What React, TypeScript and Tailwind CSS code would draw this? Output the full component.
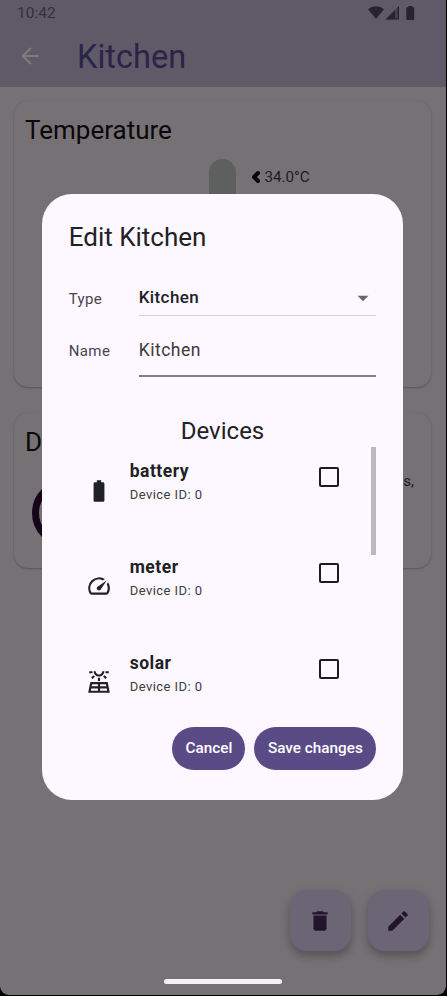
import type { ReactNode } from "react";
import {
  MdArrowBack,
  MdArrowDropDown,
  MdBatteryFull,
  MdDelete,
  MdEdit,
  MdOutlineSolarPower,
  MdSpeed,
} from "react-icons/md";

function StatusBar() {
  return (
    <div className="flex h-[26px] items-center justify-between pl-[17px] pr-[30px]">
      <span className="text-[15.500px] leading-[26px] text-[#35313b]">10:42</span>
      <svg width="48" height="16" viewBox="0 0 48 16" fill="#28242e">
        <path d="M0 4.2C4.6.3 11.4.3 16 4.2L8 14Z" />
        <path d="M17.500 14.500L31 1V14.500Z" opacity=".5" />
        <path d="M17.500 14.500L27 5V14.500ZM29.700 2.300L31 1V14.500H27V13.400H29.700Z" />
        <path d="M40.500 1h4v1.300h.700q1 0 1 1v10.800q0 1-1 1h-5.900q-1 0-1-1v-10.800q0-1 1-1h1.200Z" />
      </svg>
    </div>
  );
}

function Card({ title, className, children }: { title: string; className: string; children: ReactNode }) {
  return (
    <section className={`rounded-[14px] bg-[#767175] px-[11px] shadow-[0_1px_2px_rgba(50,56,58,0.45),0_0_1px_rgba(70,80,84,0.25)] ${className}`}>
      <h2 className="pt-[11px] text-[26px] leading-[36px] text-[#09080a]">{title}</h2>
      {children}
    </section>
  );
}

function Device({ name, icon }: { name: string; icon: ReactNode }) {
  return (
    <li className="flex h-[95.800px] items-start">
      <div className="ml-[17px] mt-[30.500px] w-[44px] text-[26px] text-[#202124]">{icon}</div>
      <div className="w-[189px] pt-[12px]">
        <div className="text-[17.500px] font-bold leading-[24px] tracking-[0.5px] text-[#202124]">{name}</div>
        <div className="mt-px text-[13px] leading-[22px] tracking-[0.45px] text-[#403d43]">Device ID: 0</div>
      </div>
      <div className="mt-[20px] size-[20px] rounded-[2px] border-2 border-[#1d1b20]" />
    </li>
  );
}

function EditDialog() {
  return (
    <div className="absolute left-[42.400px] top-[194px] flex h-[606px] w-[360.300px] flex-col rounded-[30px] bg-[#fdf7ff] px-[26.300px] text-[#202124]">
      <h1 className="pt-[26px] text-[26px] leading-[35px]">Edit Kitchen</h1>
      <div className="mt-[26px] flex h-[35px]">
        <span className="w-[70px] pt-[6px] text-[15px] leading-[24px] tracking-[0.4px] text-[#49454f]">Type</span>
        <div className="flex flex-1 justify-between border-b border-[#d5cfd7]">
          <span className="text-[17px] font-medium leading-[33px] tracking-[0.4px]">Kitchen</span>
          <MdArrowDropDown className="mt-[4px] text-[26px] text-[#69656b]" />
        </div>
      </div>
      <div className="mt-[12px] flex h-[49px]">
        <span className="w-[70px] pt-[11px] text-[15px] leading-[24px] tracking-[0.4px] text-[#49454f]">Name</span>
        <div className="flex-1 border-b-2 border-[#827d86] text-[17.500px] leading-[44px] tracking-[0.5px] text-[#3c393f]">Kitchen</div>
      </div>
      <h2 className="mt-[38px] text-center text-[24px] leading-[33px]">Devices</h2>
      <div className="-mt-px flex h-[267px] shrink-0 overflow-hidden">
        <ul className="flex-1">
          <Device name="battery" icon={<MdBatteryFull />} />
          <Device name="meter" icon={<MdSpeed />} />
          <Device name="solar" icon={<MdOutlineSolarPower />} />
        </ul>
        <div className="h-[108px] w-[5px] bg-[#bcb9bd]" />
      </div>
      <div className="mt-[12.500px] flex justify-end gap-[9px] text-[15.300px] font-medium text-white">
        <button className="h-[43px] w-[73px] rounded-full bg-[#5a4a86]">Cancel</button>
        <button className="h-[43px] w-[122px] whitespace-nowrap rounded-full bg-[#5a4a86]">Save changes</button>
      </div>
    </div>
  );
}

function Fab({ children }: { children: ReactNode }) {
  return (
    <button className="flex size-[61px] items-center justify-center rounded-[17px] bg-[#6c6575] text-[26px] text-[#21142b] shadow-[0_5px_7px_rgba(35,32,35,0.3),0_3px_12px_rgba(60,60,60,0.15)]">
      {children}
    </button>
  );
}

export default function App() {
  return (
    <div className="h-[996px] w-[447px] bg-black pr-px font-['Roboto',sans-serif]">
      <div className="relative h-[995px] w-[446px] overflow-hidden rounded-b-[9px] bg-[#767175]">
        <header className="h-[86.700px] bg-[#5e5a67]">
          <StatusBar />
          <div className="flex h-[60px] items-center pl-[17px]">
            <MdArrowBack className="text-[26px] text-[#817b7c]" />
            <span className="ml-[34px] pt-px text-[32.600px] leading-[60px] text-[#2c2347]">Kitchen</span>
          </div>
        </header>
        <main className="flex flex-col gap-[26px] pl-[14px] pr-[15px] pt-[14.300px]">
          <Card title="Temperature" className="h-[286px]">
            <div className="flex pl-[184px] pt-[11px]">
              <div className="h-[190px] w-[27px] rounded-full bg-[#5d605e]" />
              <svg className="ml-[15px] mt-[11px]" width="10" height="14" viewBox="0 0 10 14">
                <path d="M7 3L3 7l4 4" fill="none" stroke="#030204" strokeWidth="4" strokeLinejoin="round" strokeLinecap="round" />
              </svg>
              <span className="ml-[3.500px] mt-[6px] text-[15.200px] leading-[24px] text-[#1e1b1f]">34.0°C</span>
            </div>
          </Card>
          <Card title="Devices" className="h-[155px]">
            <div className="flex justify-between pl-[7px] pr-[6px] pt-[19px]">
              <div className="size-[68px] rounded-full border-[7px] border-[#18031b]" />
              <span className="-mt-[10px] text-[15px] leading-[24px] text-[#1e1b1f]">3 devices,</span>
            </div>
          </Card>
        </main>
        <EditDialog />
        <div className="absolute left-[289.500px] top-[890px] flex gap-[17px]">
          <Fab><MdDelete /></Fab>
          <Fab><MdEdit /></Fab>
        </div>
        <div className="absolute left-[163.700px] top-[979px] h-[5px] w-[118px] rounded-full bg-[#f4f2f4]" />
      </div>
    </div>
  );
}
